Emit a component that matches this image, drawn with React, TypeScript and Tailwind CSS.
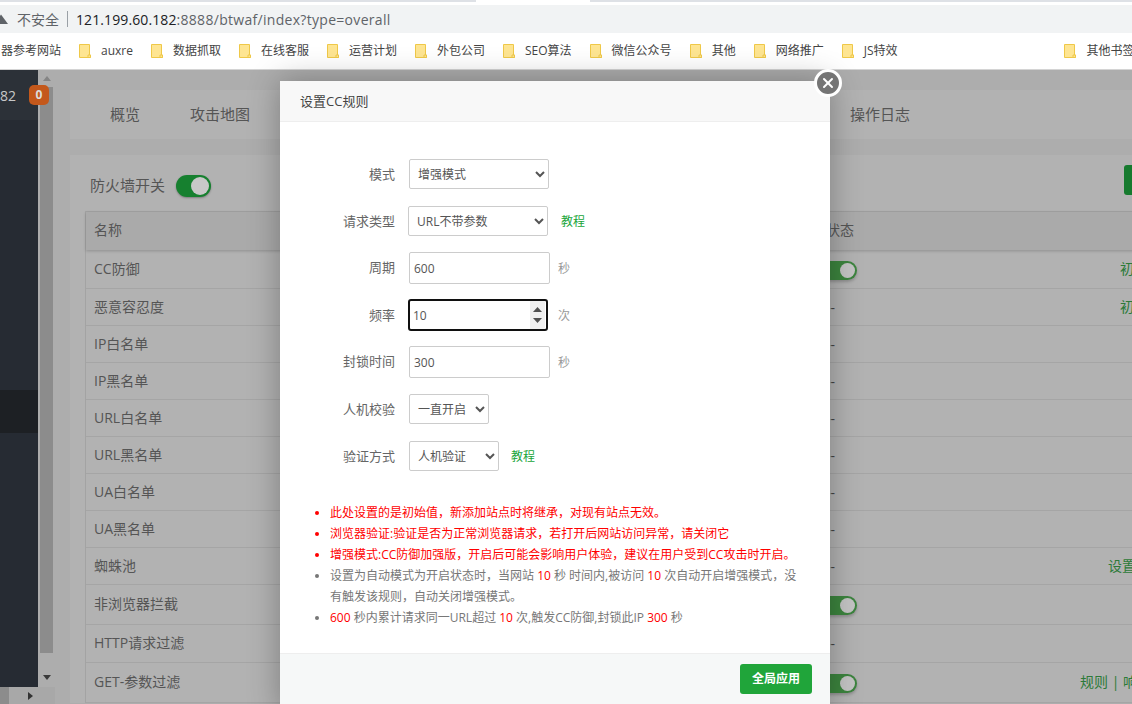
import { X } from "lucide-react";

const BOOKMARKS = ["auxre", "数据抓取", "在线客服", "运营计划", "外包公司", "SEO算法", "微信公众号", "其他", "网络推广", "JS特效"];

const ROWS = [
  { name: "CC防御", h: "h-[39px]", on: true, action: "初始规则", pad: "pl-[40px]" },
  { name: "恶意容忍度", h: "h-[37px]", action: "初始规则", pad: "pl-[40px]" },
  { name: "IP白名单", h: "h-[37px]" },
  { name: "IP黑名单", h: "h-[37px]" },
  { name: "URL白名单", h: "h-[37px]" },
  { name: "URL黑名单", h: "h-[37px]" },
  { name: "UA白名单", h: "h-[37px]" },
  { name: "UA黑名单", h: "h-[37px]" },
  { name: "蜘蛛池", h: "h-[37px]", action: "设置", pad: "pl-[28px]" },
  { name: "非浏览器拦截", h: "h-[40px]", on: true },
  { name: "HTTP请求过滤", h: "h-[38px]" },
  { name: "GET-参数过滤", h: "h-[40px]", on: true, action: "规则 | 响应内容", pad: "pl-0" },
];

// full-width comma used in the notes
const C = "\uFF0C";

function Folder() {
  return (
    <svg width="12" height="14" viewBox="0 0 12 14" className="shrink-0">
      <path d="M.5.5h10v10.5h.9v2.5H.5z" fill="#fee592" stroke="#efc848" />
      <path d="M9 11h2.5v2.5H9z" fill="#fee592" stroke="#efc848" />
    </svg>
  );
}

function Toggle({ className }: { className: string }) {
  return (
    <div className={`flex h-[19px] w-[36px] items-center justify-end rounded-full bg-[#3c843e] pr-[2px] shadow-[0_2px_3px_rgba(0,0,0,0.2)] ${className}`}>
      <div className="h-[15px] w-[15px] rounded-full bg-[#c4c4c4]" />
    </div>
  );
}

function Select({ value, className }: { value: string; className: string }) {
  return (
    <select
      defaultValue={value}
      className={`h-[30px] rounded-[2px] border border-[#ccc] bg-white pl-[4px] text-[12px] text-[#555] ${className}`}
    >
      <option>{value}</option>
    </select>
  );
}

function Field({ label, mt, pt = "pt-[1px]", children }: { label: string; mt: string; pt?: string; children: React.ReactNode }) {
  return (
    <div className={`flex items-center ${mt}`}>
      <label className={`w-[115px] shrink-0 text-right text-[13px] text-[#666] ${pt}`}>{label}</label>
      <div className="ml-[14px] flex items-center">{children}</div>
    </div>
  );
}

function Num({ value }: { value: string }) {
  return <input defaultValue={value} className="h-[32px] w-[141px] rounded-[2px] border border-[#ccc] pl-[4px] text-[12px] text-[#555] outline-none" />;
}

function Red({ children }: { children: React.ReactNode }) {
  return <span className="text-[#f00]">{children}</span>;
}

export default function App() {
  return (
    <div className="relative flex h-[704px] w-[1132px] flex-col overflow-hidden bg-white font-['Open_Sans','Noto_Sans_CJK_SC',sans-serif]">
      {/* browser chrome */}
      <div className="flex h-[5px] items-start">
        <div className="h-[2px] w-[476px] bg-[#dee1e6]" />
        <div className="w-[114px]" />
        <div className="h-[2px] flex-1 bg-[#dee1e6]" />
      </div>
      <div className="flex h-[28px] items-center bg-[#f1f3f4] text-[14px]">
        <svg width="8" height="12" viewBox="0 0 8 12" className="shrink-0">
          <path d="M1 1.5 8 11H-6z" fill="#5f6368" />
        </svg>
        <span className="ml-[9px] text-[#5f6368]">不安全</span>
        <div className="ml-[8px] h-[16px] w-px bg-[#9aa0a6]" />
        <span className="ml-[8px] tracking-[0.1px] text-[#202124]">121.199.60.182</span>
        <span className="tracking-[0.3px] text-[#5f6368]">:8888/btwaf/index?type=overall</span>
      </div>
      <div className="flex h-[37px] items-center whitespace-nowrap border-b border-[#d4d4d4] bg-white text-[12px] text-[#444]">
        <span className="ml-[-1px] w-[62px] shrink-0 overflow-hidden text-right [direction:rtl]">器参考网站</span>
        <div className="ml-[18px] flex gap-[18px]">
          {BOOKMARKS.map((b) => (
            <div key={b} className="flex items-center gap-[10px]">
              <Folder />
              <span>{b}</span>
            </div>
          ))}
        </div>
        <div className="ml-[154px] h-[18px] w-px bg-[#ccc]" />
        <div className="ml-[13px] flex items-center gap-[10px]">
          <Folder />
          <span>其他书签</span>
        </div>
      </div>

      {/* dimmed page */}
      <div className="flex min-h-0 flex-1 bg-[#adadad]">
        <aside className="flex w-[38px] shrink-0 flex-col bg-[#262b33] text-[#c8c8c8]">
          <div className="flex h-[50px] items-center bg-[#2c3138]">
            <div className="flex w-[16px] shrink-0 justify-end overflow-hidden text-[14px]">182</div>
            <div className="relative z-10 ml-[13px] flex h-[20px] w-[20px] shrink-0 items-center justify-center rounded-[5px] bg-[#c4581b] text-[12px] font-bold text-[#ddd]">0</div>
          </div>
          <div className="mt-[270px] h-[43px] bg-[#1d2024]" />
        </aside>

        <div className="flex w-[17px] shrink-0 flex-col pl-[2px]">
          <div className="flex h-[17px] w-[13px] items-center justify-center">
            <svg width="8" height="5" viewBox="0 0 8 5"><path d="M4 0l4 5H0z" fill="#858585" /></svg>
          </div>
          <div className="h-[566px] w-[13px] bg-[#8c8c8c]" />
          <div className="flex h-[49px] w-[13px] items-center justify-center">
            <svg width="8" height="5" viewBox="0 0 8 5"><path d="M4 5L8 0H0z" fill="#3a3a3a" /></svg>
          </div>
        </div>

        <main className="min-w-0 flex-1 pl-[15px] pt-[20px]">
          <nav className="flex h-[49px] w-[1100px] items-center bg-[#b2b2b2] pl-[40px] text-[15px] text-[#555]">
            <span>概览</span>
            <span className="ml-[50px]">攻击地图</span>
            <span className="ml-[600px]">操作日志</span>
          </nav>
          <section className="mt-[16px] w-[1100px] bg-[#b2b2b2] pl-[15px]">
            <div className="flex h-[56px] items-center whitespace-nowrap pl-[5px] pt-[6px] text-[15px] text-[#555]">
              <span className="mb-[2px] shrink-0">防火墙开关</span>
              <div className="ml-[11px] flex h-[22px] w-[35px] shrink-0 items-center justify-end rounded-full bg-[#16802f] pr-[2px] shadow-[0_1px_2px_rgba(0,0,0,0.3)]">
                <div className="h-[18px] w-[18px] rounded-full bg-[#c8c8c8]" />
              </div>
              <div className="mb-[12px] ml-[913px] h-[30px] w-[40px] shrink-0 rounded-[3px] bg-[#167a2e]" />
            </div>
            <div className="border-l border-t border-[#a3a3a3] text-[14px] text-[#555]">
              <div className="flex h-[38px] items-center bg-[#aaaaaa] pb-[4px] pl-[8px] shadow-[0_1px_3px_rgba(0,0,0,0.2)]">
                <span className="w-[732px]">名称</span>
                <span>状态</span>
              </div>
              {ROWS.map((r) => (
                <div key={r.name} className={`flex items-center border-b border-[#a5a5a5] pl-[8px] ${r.h}`}>
                  <span className="w-[732px] shrink-0 pb-[2px]">{r.name}</span>
                  <div className="w-[254px] shrink-0">
                    {r.on ? <Toggle className="ml-[-5px] mt-[2px]" /> : <span className="pb-[2px] text-[#444]">--</span>}
                  </div>
                  {r.action && <span className={`whitespace-nowrap pb-[2px] text-[14px] text-[#2c7a38] ${r.pad}`}>{r.action}</span>}
                </div>
              ))}
            </div>
          </section>
        </main>
      </div>

      {/* horizontal scrollbar under the sidebar */}
      <div className="absolute bottom-0 left-0 flex h-[17px] w-[55px] items-center bg-[#a8a8a8]">
        <div className="h-full w-[9px] bg-[#8c8c8c]" />
        <svg width="5" height="8" viewBox="0 0 5 8" className="ml-[19px]"><path d="M0 0l5 4-5 4z" fill="#333" /></svg>
      </div>

      {/* modal */}
      <div className="absolute left-[280px] top-[81px] z-20 w-[550px] bg-white shadow-[0_0_30px_rgba(0,0,0,0.3)]">
        <div className="flex h-[41px] items-center border-b border-[#eee] bg-[#f8f8f8] pl-[20px] pt-[2px] text-[13px] text-[#444]">设置CC规则</div>
        <div className="h-[531px] pt-[37px]">
          <Field label="模式" mt="mt-0">
            <Select value="增强模式" className="w-[140px]" />
          </Field>
          <Field label="请求类型" mt="mt-[17px]">
            <Select value="URL不带参数" className="ml-[-1px] w-[140px]" />
            <a className="ml-[13px] pt-[1px] text-[12px] text-[#20a53a]">教程</a>
          </Field>
          <Field label="周期" mt="mt-[16px]" pt="pt-0">
            <Num value="600" />
            <span className="ml-[8px] pt-[1px] text-[12px] text-[#999]">秒</span>
          </Field>
          <Field label="频率" mt="mt-[15px]">
            <div className="ml-[-1px] flex h-[32px] w-[140px] items-center rounded-[3px] border-2 border-[#101010] pl-[3px] pr-[1px] text-[12px] text-[#555]">
              <input defaultValue="10" className="min-w-0 flex-1 pt-[1px] outline-none" />
              <div className="flex h-full w-[15px] flex-col items-center justify-around bg-[#efefef] py-[3px]">
                <svg width="9" height="5" viewBox="0 0 9 5"><path d="M4.5 0 9 5H0z" fill="#505050" /></svg>
                <svg width="9" height="5" viewBox="0 0 9 5"><path d="M4.5 5 9 0H0z" fill="#505050" /></svg>
              </div>
            </div>
            <span className="ml-[10px] pt-[1px] text-[12px] text-[#999]">次</span>
          </Field>
          <Field label="封锁时间" mt="mt-[15px]" pt="pt-0">
            <Num value="300" />
            <span className="ml-[8px] pt-[1px] text-[12px] text-[#999]">秒</span>
          </Field>
          <Field label="人机校验" mt="mt-[16px]">
            <Select value="一直开启" className="w-[80px]" />
          </Field>
          <Field label="验证方式" mt="mt-[17px]">
            <Select value="人机验证" className="w-[90px]" />
            <a className="ml-[12px] pt-[1px] text-[12px] text-[#20a53a]">教程</a>
          </Field>
          <ul className="ml-[50px] mt-[31px] w-[474px] list-disc text-[12px] leading-[21px] text-[#777]">
            <li className="text-[#f00]">{`此处设置的是初始值${C}新添加站点时将继承${C}对现有站点无效。`}</li>
            <li className="text-[#f00]">{`浏览器验证:验证是否为正常浏览器请求${C}若打开后网站访问异常${C}请关闭它`}</li>
            <li className="text-[#f00]">{`增强模式:CC防御加强版${C}开启后可能会影响用户体验${C}建议在用户受到CC攻击时开启。`}</li>
            <li>
              {`设置为自动模式为开启状态时${C}当网站 `}<Red>10</Red> 秒 时间内,被访问 <Red>10</Red>
              {` 次自动开启增强模式${C}没有触发该规则${C}自动关闭增强模式。`}
            </li>
            <li><Red>600</Red> 秒内累计请求同一URL超过 <Red>10</Red> 次,触发CC防御,封锁此IP <Red>300</Red> 秒</li>
          </ul>
        </div>
        <div className="flex h-[60px] justify-end border-t border-[#eee] bg-[#f6f8f8] pr-[18px] pt-[10px]">
          <button type="button" className="h-[30px] w-[72px] rounded-[3px] bg-[#20a53a] text-[12px] font-bold text-white">全局应用</button>
        </div>
        <button type="button" className="absolute right-[-12px] top-[-12px] flex h-[28px] w-[28px] items-center justify-center rounded-full border-[3px] border-white bg-[#757575] text-white">
          <X size={16} strokeWidth={3} />
        </button>
      </div>
    </div>
  );
}
